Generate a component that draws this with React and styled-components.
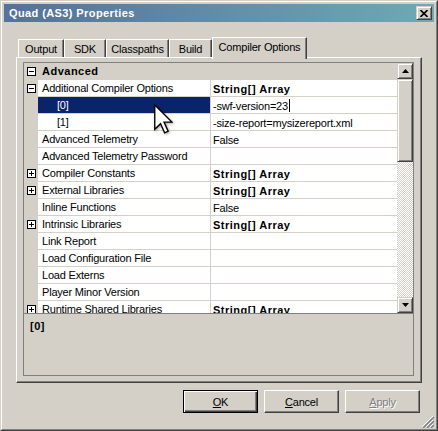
import React from 'react';
import styled, { createGlobalStyle, css } from 'styled-components';

const FACE = '#D4D0C8';

const GlobalStyle = createGlobalStyle`
  html, body { margin: 0; padding: 0; background: ${FACE}; }
  body {
    font-family: "Liberation Sans", Arial, sans-serif;
    font-size: 11px;
    letter-spacing: -0.2px;
    color: #000;
  }
  * { box-sizing: border-box; }
`;

const raised = css`
  border: 1px solid;
  border-color: ${FACE} #404040 #404040 ${FACE};
  box-shadow: inset 1px 1px #fff, inset -1px -1px #808080;
  background: ${FACE};
`;

const Window = styled.div`
  position: relative;
  width: 438px;
  height: 431px;
  border: 1px solid;
  border-color: ${FACE} #404040 #404040 ${FACE};
  background: ${FACE};
  overflow: hidden;
`;

const WindowInner = styled.div`
  position: relative;
  height: 100%;
  border: 1px solid;
  border-color: #fff #808080 #808080 #fff;
  padding: 2px;
  display: flex;
  flex-direction: column;
`;

const TitleBar = styled.div`
  height: 18px;
  flex: none;
  display: flex;
  align-items: center;
  justify-content: space-between;
  padding: 0 2px 0 5px;
  background: linear-gradient(90deg, #55719c 0%, #6ea9b5 100%);
`;

const Title = styled.span`
  color: #fff;
  font-weight: bold;
  letter-spacing: 0.4px;
  line-height: 18px;
`;

const CloseButton = styled.div`
  ${raised}
  width: 16px;
  height: 14px;
  display: flex;
  align-items: center;
  justify-content: center;
`;

const Body = styled.div`
  flex: 1;
  display: flex;
  flex-direction: column;
  padding: 15px 12px 0 12px;
`;

const TabStrip = styled.div`
  position: relative;
  z-index: 1;
  display: flex;
  align-items: flex-end;
  height: 20px;
  flex: none;
  padding-left: 2px;
`;

const Tab = styled.div`
  width: ${(p) => p.$w}px;
  height: ${(p) => (p.$active ? 22 : 18)}px;
  margin-bottom: ${(p) => (p.$active ? -2 : 0)}px;
  padding-bottom: ${(p) => (p.$active ? 3 : 0)}px;
  flex: none;
  border: 1px solid;
  border-bottom: none;
  border-color: #fff #404040 transparent #fff;
  box-shadow: inset -1px 0 #808080;
  background: ${FACE};
  display: flex;
  align-items: center;
  justify-content: center;
  white-space: nowrap;
  line-height: 14px;
`;

const TabPanel = styled.div`
  height: 326px;
  flex: none;
  border: 1px solid;
  border-color: #fff #404040 #404040 #fff;
  box-shadow: inset -1px -1px #808080;
  padding: 4px 7px 6px 6px;
  display: flex;
`;

const PropertyGrid = styled.div`
  flex: 1;
  display: flex;
  flex-direction: column;
`;

const GridView = styled.div`
  height: 251px;
  flex: none;
  display: flex;
  border: 1px solid #808080;
  border-bottom: none;
  background: ${FACE};
`;

const Rows = styled.div`
  flex: 1;
  display: flex;
  flex-direction: column;
  overflow: hidden;
`;

const Row = styled.div`
  display: flex;
  height: 17px;
  flex: none;
  background: ${FACE};
`;

const Gutter = styled.div`
  width: 14px;
  flex: none;
  display: flex;
  align-items: center;
  justify-content: center;
`;

const CategoryLabel = styled.div`
  flex: 1;
  padding-left: 4px;
  font-weight: bold;
  letter-spacing: 0.5px;
  line-height: 17px;
`;

const Label = styled.div`
  width: 172px;
  flex: none;
  padding-left: ${(p) => (p.$indent ? 19 : 4)}px;
  background: ${(p) => (p.$selected ? '#0A246A' : '#fff')};
  color: ${(p) => (p.$selected ? '#fff' : '#000')};
  border-bottom: 1px solid ${FACE};
  line-height: 17px;
  white-space: nowrap;
  overflow: hidden;
`;

const Value = styled.div`
  flex: 1;
  min-width: 0;
  display: flex;
  align-items: center;
  border-left: 1px solid ${FACE};
  border-bottom: 1px solid ${FACE};
  background: #fff;
  padding: 1px 0 0 2px;
  line-height: 16px;
  white-space: nowrap;
  overflow: hidden;
  font-weight: ${(p) => (p.$bold ? 'bold' : 'normal')};
  letter-spacing: ${(p) => (p.$bold ? '0.5px' : '-0.2px')};
`;

const Caret = styled.span`
  display: inline-block;
  width: 1px;
  height: 13px;
  background: #000;
  margin-left: 1px;
`;

const ScrollBar = styled.div`
  width: 16px;
  flex: none;
  display: flex;
  flex-direction: column;
`;

const ScrollButton = styled.div`
  ${raised}
  height: 16px;
  flex: none;
  display: flex;
  align-items: center;
  justify-content: center;
`;

const Thumb = styled.div`
  ${raised}
  height: 83px;
  flex: none;
`;

const Track = styled.div`
  flex: 1;
  background: repeating-conic-gradient(#fff 0 25%, ${FACE} 0 50%) 0 0 / 2px 2px;
`;

const Description = styled.div`
  flex: 1;
  border: 1px solid #808080;
  padding: 5px 6px;
  font-weight: bold;
  letter-spacing: 0.5px;
  line-height: 14px;
`;

const ButtonRow = styled.div`
  display: flex;
  justify-content: flex-end;
  gap: 6px;
  margin-top: 7px;
  padding-right: 2px;
`;

const Button = styled.div`
  width: 75px;
  height: 23px;
  display: flex;
  align-items: center;
  justify-content: center;
  background: ${FACE};
  ${(p) =>
    p.$default
      ? css`
          border: 1px solid #000;
          box-shadow: inset 1px 1px #fff, inset -1px -1px #404040, inset -2px -2px #808080;
        `
      : css`
          border: 1px solid;
          border-color: #fff #404040 #404040 #fff;
          box-shadow: inset -1px -1px #808080;
        `}
  color: ${(p) => (p.$disabled ? '#808080' : '#000')};
  text-shadow: ${(p) => (p.$disabled ? '1px 1px #fff' : 'none')};
  u { text-underline-offset: 1px; }
`;

const SizeGrip = styled.svg`
  position: absolute;
  right: 2px;
  bottom: 1px;
`;

const Cursor = styled.svg`
  position: absolute;
  left: 153px;
  top: 103px;
  filter: drop-shadow(1px 1px 1px rgba(0, 0, 0, 0.35));
`;

const Arrow = ({ up }) => (
  <svg width="7" height="4" viewBox="0 0 7 4">
    <polygon points={up ? '3.5,0 7,4 0,4' : '0,0 7,0 3.5,4'} fill="#000" />
  </svg>
);

const ExpandBox = ({ plus }) => (
  <svg width="9" height="9" viewBox="0 0 9 9">
    <rect x="0.5" y="0.5" width="8" height="8" fill="#fff" stroke="#000" />
    <line x1="2" y1="4.5" x2="7" y2="4.5" stroke="#000" />
    {plus && <line x1="4.5" y1="2" x2="4.5" y2="7" stroke="#000" />}
  </svg>
);

const rows = [
  { label: 'Additional Compiler Options', value: 'String[] Array', bold: true, box: 'minus' },
  { label: '[0]', indent: true, value: '-swf-version=23', selected: true, editing: true },
  { label: '[1]', indent: true, value: '-size-report=mysizereport.xml' },
  { label: 'Advanced Telemetry', value: 'False' },
  { label: 'Advanced Telemetry Password', value: '' },
  { label: 'Compiler Constants', value: 'String[] Array', bold: true, box: 'plus' },
  { label: 'External Libraries', value: 'String[] Array', bold: true, box: 'plus' },
  { label: 'Inline Functions', value: 'False' },
  { label: 'Intrinsic Libraries', value: 'String[] Array', bold: true, box: 'plus' },
  { label: 'Link Report', value: '' },
  { label: 'Load Configuration File', value: '' },
  { label: 'Load Externs', value: '' },
  { label: 'Player Minor Version', value: '' },
  { label: 'Runtime Shared Libraries', value: 'String[] Array', bold: true, box: 'plus' },
];

const tabs = [
  { name: 'Output', w: 46 },
  { name: 'SDK', w: 42 },
  { name: 'Classpaths', w: 63 },
  { name: 'Build', w: 43 },
  { name: 'Compiler Options', w: 95, active: true },
];

export default function App() {
  return (
    <>
      <GlobalStyle />
      <Window>
        <WindowInner>
          <TitleBar>
            <Title>Quad (AS3) Properties</Title>
            <CloseButton>
              <svg width="8" height="7" viewBox="0 0 8 7">
                <path d="M0.5 0 L7.5 7 M7.5 0 L0.5 7" stroke="#000" strokeWidth="1.6" />
              </svg>
            </CloseButton>
          </TitleBar>
          <Body>
            <TabStrip>
              {tabs.map((t) => (
                <Tab key={t.name} $w={t.w} $active={t.active}>
                  {t.name}
                </Tab>
              ))}
            </TabStrip>
            <TabPanel>
              <PropertyGrid>
                <GridView>
                  <Rows>
                    <Row>
                      <Gutter>
                        <ExpandBox />
                      </Gutter>
                      <CategoryLabel>Advanced</CategoryLabel>
                    </Row>
                    {rows.map((r) => (
                      <Row key={r.label}>
                        <Gutter>{r.box && <ExpandBox plus={r.box === 'plus'} />}</Gutter>
                        <Label $indent={r.indent} $selected={r.selected}>
                          {r.label}
                        </Label>
                        <Value $bold={r.bold}>
                          {r.value}
                          {r.editing && <Caret />}
                        </Value>
                      </Row>
                    ))}
                  </Rows>
                  <ScrollBar>
                    <ScrollButton>
                      <Arrow up />
                    </ScrollButton>
                    <Thumb />
                    <Track />
                    <ScrollButton>
                      <Arrow />
                    </ScrollButton>
                  </ScrollBar>
                </GridView>
                <Description>[0]</Description>
              </PropertyGrid>
            </TabPanel>
            <ButtonRow>
              <Button $default>
                <span><u>O</u>K</span>
              </Button>
              <Button>
                <span><u>C</u>ancel</span>
              </Button>
              <Button $disabled>
                <span><u>A</u>pply</span>
              </Button>
            </ButtonRow>
          </Body>
          <SizeGrip width="12" height="12" viewBox="0 0 12 12">
            <path d="M12 1 L1 12 M12 5 L5 12 M12 9 L9 12" stroke="#808080" strokeWidth="1.5" />
            <path d="M11 0 L0 11 M11 4 L4 11 M11 8 L8 11" stroke="#fff" strokeWidth="1" />
          </SizeGrip>
        </WindowInner>
        <Cursor width="19" height="30" viewBox="0 0 12.5 19.5">
          <path
            d="M0.5 0.5 L0.5 16.5 L4.3 12.8 L7 18.8 L9.3 17.8 L6.6 11.8 L11.8 11.8 Z"
            fill="#fff"
            stroke="#000"
            strokeWidth="0.9"
            strokeLinejoin="miter"
          />
        </Cursor>
      </Window>
    </>
  );
}
